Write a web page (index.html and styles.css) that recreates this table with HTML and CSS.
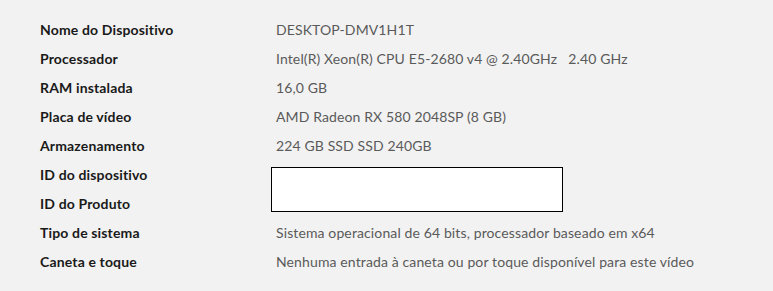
FILE: index.html
```html
<!DOCTYPE html>
<html lang="pt-BR">
<head>
  <meta charset="UTF-8">
  <title>Especificações do dispositivo</title>
  <link rel="stylesheet" href="styles.css">
</head>
<body>

  <!-- Device specs table -->
  <div class="specs">
    <div class="label">Nome do Dispositivo</div>
    <div class="value">DESKTOP-DMV1H1T</div>

    <div class="label">Processador</div>
    <div class="value">Intel(R) Xeon(R) CPU E5-2680 v4 @ 2.40GHz&nbsp;&nbsp; 2.40 GHz</div>

    <div class="label">RAM instalada</div>
    <div class="value">16,0 GB</div>

    <div class="label">Placa de vídeo</div>
    <div class="value">AMD Radeon RX 580 2048SP (8 GB)</div>

    <div class="label">Armazenamento</div>
    <div class="value">224 GB SSD SSD 240GB</div>

    <div class="label">ID do dispositivo</div>
    <div class="value redact-cell"><div class="redact"></div></div>

    <div class="label">ID do Produto</div>

    <div class="label">Tipo de sistema</div>
    <div class="value">Sistema operacional de 64 bits, processador baseado em x64</div>

    <div class="label">Caneta e toque</div>
    <div class="value">Nenhuma entrada à caneta ou por toque disponível para este vídeo</div>
  </div>

</body>
</html>
```

FILE: styles.css
```css
body {
  margin: 0;
  background: #f2f2f2;
  font-family: Lato, "Open Sans", sans-serif;
  font-size: 14px;
}

.specs {
  display: grid;
  grid-template-columns: 236px 1fr;
  grid-auto-rows: 29px;
  padding: 15px 0 0 40px;
}

.label,
.value {
  display: flex;
  align-items: center;
  white-space: nowrap;
}

.label {
  color: #1a1a1a;
  font-weight: 700;
  letter-spacing: 0.15px;
}

.value {
  color: #5a5a5a;
  letter-spacing: 0.12px;
}

/* blanked-out IDs, spans two rows */
.redact-cell {
  grid-row: span 2;
}
.redact {
  width: 290px;
  height: 43px;
  margin-left: -5px;
  background: white;
  border: 1px solid #000;
}
```
